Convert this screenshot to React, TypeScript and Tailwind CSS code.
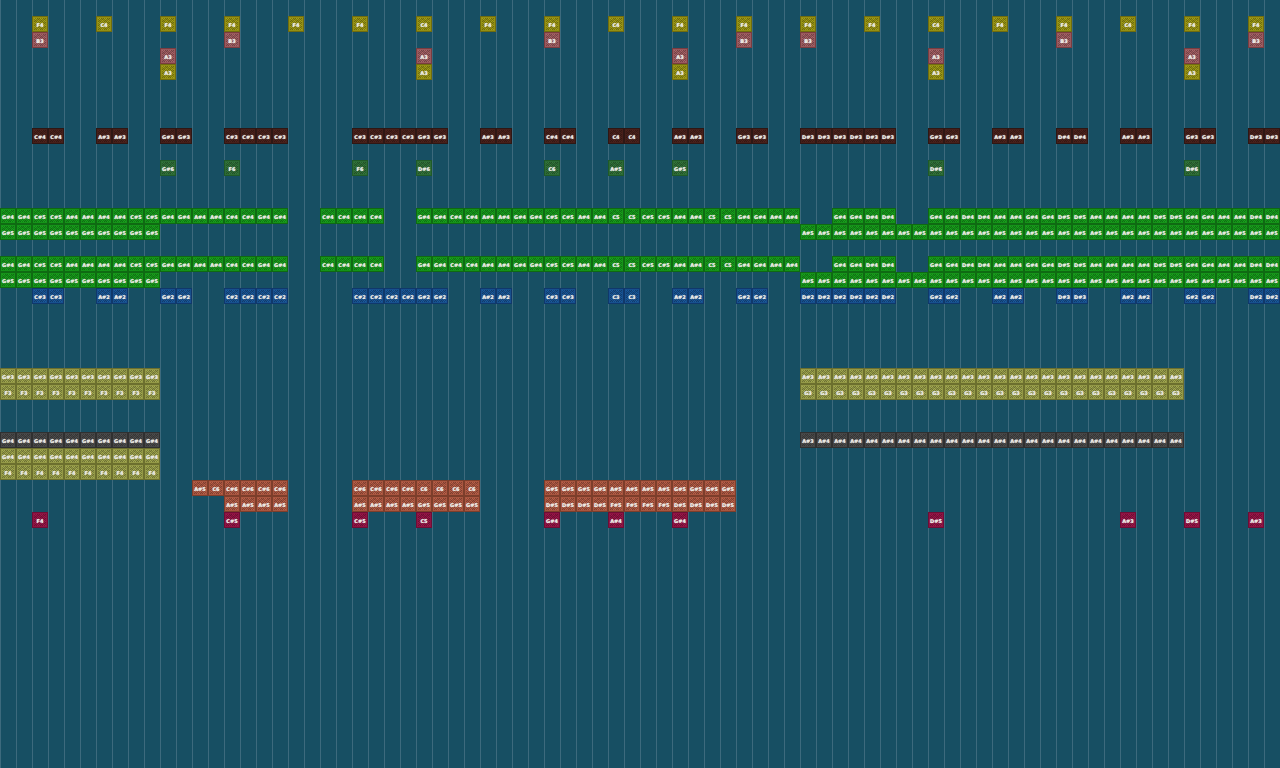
import React from "react";

type Run = [at: number, notes: string];

interface Lane {
  row: number;
  tone: keyof typeof TONES;
  runs: Run[];
}

const TONES = {
  yellow: "border-[#706c0e] bg-[#a5a116]",
  rose: "border-[#7a3c40] bg-[#ac6469]",
  brown: "border-[#2f1714] bg-[#4e231d]",
  forest: "border-[#1f5a28] bg-[#33783c]",
  green: "border-[#0f6a12] bg-[#18a51c]",
  blue: "border-[#10386b] bg-[#1a5a9f]",
  olive: "border-[#6c6f2e] bg-[#a5ab50]",
  gray: "border-[#303030] bg-[#4e4e4e]",
  orange: "border-[#7d3e2b] bg-[#bd6048]",
  crimson: "border-[#6e0d35] bg-[#a0164b]",
};

const MELODY: Run[] = [
  [0, "G#4*2 C#5*2 A#4*4 C#5*2 G#4*2 A#4*2 C#4*2 G#4*2"],
  [20, "C#4*4"],
  [26, "G#4*2 C#4*2 A#4*2 G#4*2 C#5*2 A#4*2 C5*2 C#5*2 A#4*2 C5*2 G#4*2 A#4*2"],
  [52, "G#4*2 D#4*2"],
  [58, "G#4*2 D#4*2 A#4*2 G#4*2 D#5*2 A#4*4 D#5*2 G#4*2 A#4*2 D#4*2"],
];

const HARMONY: Run[] = [
  [0, "G#5*10"],
  [50, "A#5*30"],
];

const every16 = (note: string): Run[] => [10, 26, 42, 58, 74].map(at => [at, note]);

const LANES: Lane[] = [
  {
    row: 1,
    tone: "yellow",
    runs: Array.from({ length: 20 }, (_, i): Run => [2 + i * 4, [1, 6, 9, 14, 17].includes(i) ? "C4" : "F4"]),
  },
  { row: 2, tone: "rose", runs: [2, 14, 34, 46, 50, 66, 78].map((at): Run => [at, "B3"]) },
  { row: 3, tone: "rose", runs: every16("A3") },
  { row: 4, tone: "yellow", runs: every16("A3") },
  {
    row: 8,
    tone: "brown",
    runs: [
      [2, "C#4*2"], [6, "A#3*2"], [10, "G#3*2"], [14, "C#3*4"], [22, "C#3*4 G#3*2"], [30, "A#3*2"],
      [34, "C#4*2"], [38, "C4*2"], [42, "A#3*2"], [46, "G#3*2"], [50, "D#3*6"], [58, "G#3*2"],
      [62, "A#3*2"], [66, "D#4*2"], [70, "A#3*2"], [74, "G#3*2"], [78, "D#3*2"],
    ],
  },
  {
    row: 10,
    tone: "forest",
    runs: [
      [10, "G#6"], [14, "F6"], [22, "F6"], [26, "D#6"], [34, "C6"], [38, "A#5"], [42, "G#5"], [58, "D#6"], [74, "D#6"],
    ],
  },
  { row: 13, tone: "green", runs: MELODY },
  { row: 14, tone: "green", runs: HARMONY },
  { row: 16, tone: "green", runs: MELODY },
  { row: 17, tone: "green", runs: HARMONY },
  {
    row: 18,
    tone: "blue",
    runs: [
      [2, "C#3*2"], [6, "A#2*2"], [10, "G#2*2"], [14, "C#2*4"], [22, "C#2*4 G#2*2"], [30, "A#2*2"],
      [34, "C#3*2"], [38, "C3*2"], [42, "A#2*2"], [46, "G#2*2"], [50, "D#2*6"], [58, "G#2*2"],
      [62, "A#2*2"], [66, "D#3*2"], [70, "A#2*2"], [74, "G#2*2"], [78, "D#2*2"],
    ],
  },
  { row: 23, tone: "olive", runs: [[0, "G#3*10"], [50, "A#3*24"]] },
  { row: 24, tone: "olive", runs: [[0, "F3*10"], [50, "G3*24"]] },
  { row: 27, tone: "gray", runs: [[0, "G#4*10"], [50, "A#3 A#4*23"]] },
  { row: 28, tone: "olive", runs: [[0, "G#4*10"]] },
  { row: 29, tone: "olive", runs: [[0, "F4*10"]] },
  { row: 30, tone: "orange", runs: [[12, "A#5 C6 C#6*4"], [22, "C#6*4 C6*4"], [34, "G#5*4 A#5*4 G#5*4"]] },
  { row: 31, tone: "orange", runs: [[14, "A#5*4"], [22, "A#5*4 G#5*4"], [34, "D#5*4 F#5*4 D#5*4"]] },
  {
    row: 32,
    tone: "crimson",
    runs: [
      [2, "F4"], [14, "C#5"], [22, "C#5"], [26, "C5"], [34, "G#4"], [38, "A#4"], [42, "G#4"],
      [58, "D#5"], [70, "A#3"], [74, "D#5"], [78, "A#3"],
    ],
  },
];

// "G#4*2 C5" -> ["G#4", "G#4", "C5"]
const expand = (notes: string) =>
  notes.split(" ").flatMap(part => {
    const [name, count] = part.split("*");
    return Array<string>(Number(count ?? 1)).fill(name);
  });

function Block({ name, tone }: { name: string; tone: Lane["tone"] }) {
  return (
    <div className={`size-4 border ${TONES[tone]}`}>
      <div className="flex size-full items-center justify-center border border-black/10 bg-[repeating-conic-gradient(rgba(0,0,0,0.26)_0_25%,transparent_0_50%),repeating-conic-gradient(rgba(0,0,0,0.12)_0_25%,transparent_0_50%)] bg-[length:2px_2px,6px_4px] bg-clip-padding pt-[2px]">
        <span className="text-[5px] leading-none font-bold whitespace-nowrap text-[#ecebe6] [text-shadow:0_0_1px_currentColor]">
          {name}
        </span>
      </div>
    </div>
  );
}

export default function App() {
  return (
    <main className="grid min-h-screen auto-rows-[16px] grid-cols-[repeat(80,16px)] content-start overflow-hidden bg-[#174f63] bg-[linear-gradient(to_right,#3d6a7d_1px,transparent_1px)] bg-[length:16px_16px] font-['DejaVu_Sans',sans-serif]">
      {LANES.map(({ row, tone, runs }) =>
        runs.map(([at, notes]) => {
          const names = expand(notes);
          return (
            <div
              key={`${row}-${at}`}
              className="flex"
              style={{ gridRow: row + 1, gridColumn: `${at + 1} / span ${names.length}` }}
            >
              {names.map((name, i) => (
                <Block key={i} name={name} tone={tone} />
              ))}
            </div>
          );
        })
      )}
    </main>
  );
}
